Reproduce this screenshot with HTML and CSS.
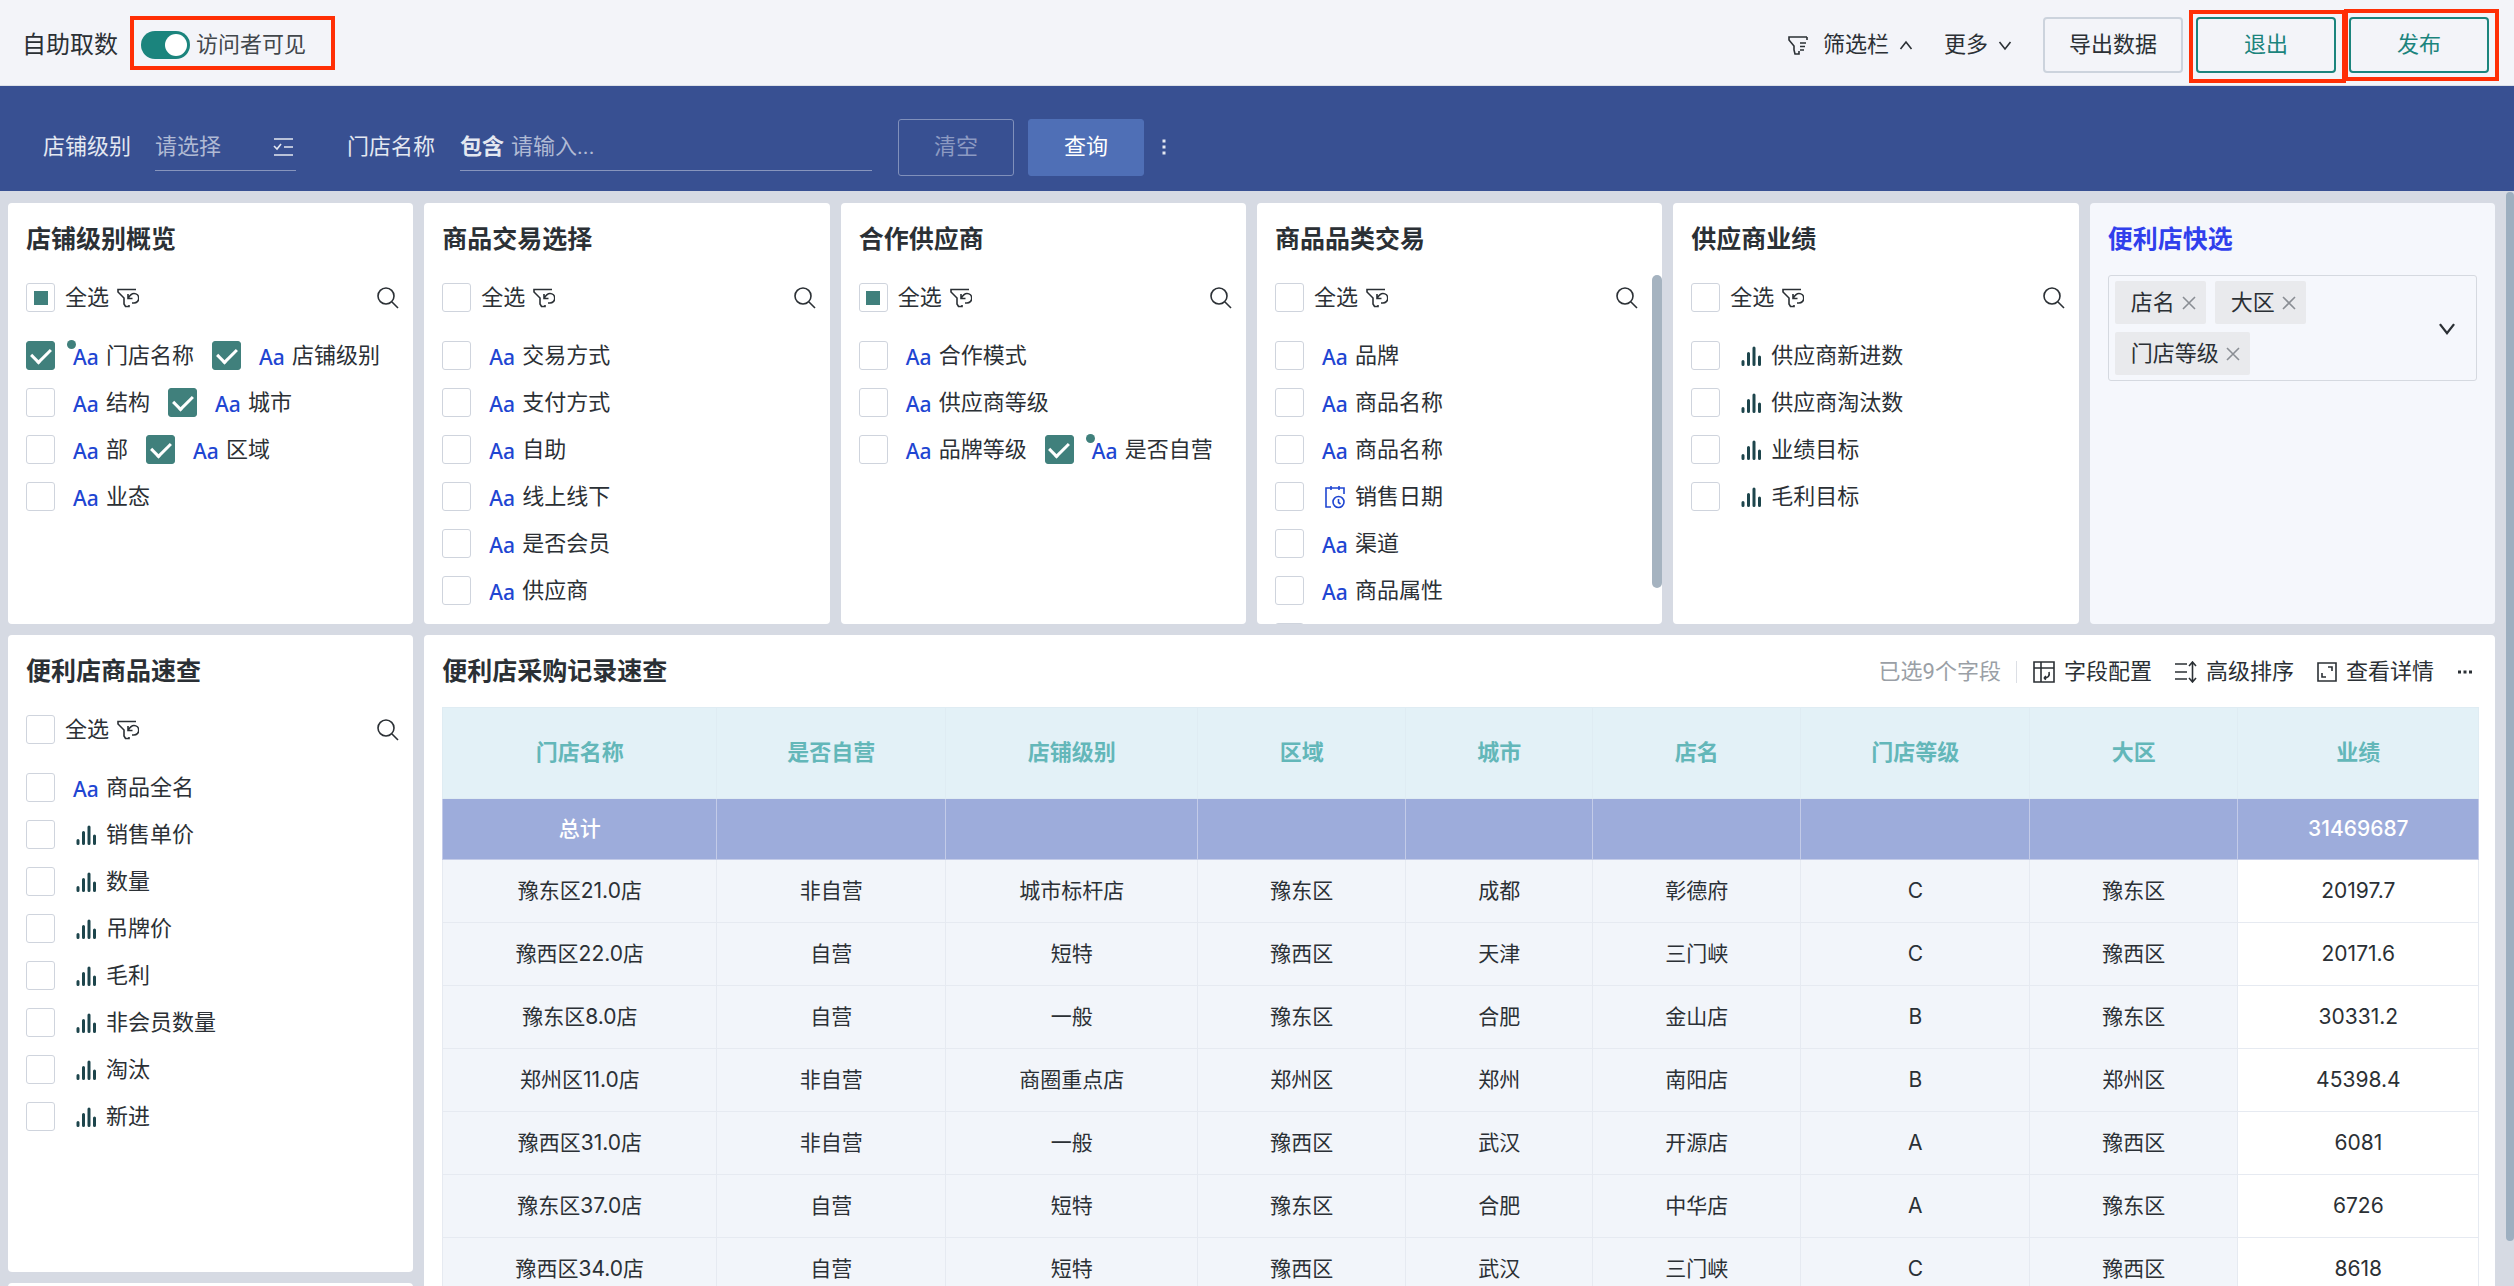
FILE: index.html
```
<!DOCTYPE html>
<html lang="zh-CN">
<head>
<title>自助取数</title>
<meta charset="UTF-8" />
<link rel="stylesheet" href="styles.css">
<script src="fields.js" defer></script>
</head>
<body>
<svg class="sprite" aria-hidden="true">
	<symbol id="i-filter" viewBox="0 0 20 20"><path d="M19 2H1v3l5 6v4l1 4h4v-3M19 2v3M12 8h6M12 11.500h5M12 15h4"/></symbol>
	<symbol id="i-up" viewBox="0 0 14 14"><path d="M1.500 11L7 4l5.500 7"/></symbol>
	<symbol id="i-down" viewBox="0 0 14 14"><path d="M1.500 4L7 11l5.500-7"/></symbol>
	<symbol id="i-list" viewBox="0 0 20 18"><path d="M1 1h19M11 9h9M1 17h19M1 8l3 3 4-5"/></symbol>
	<symbol id="i-reset" viewBox="0 0 22 20"><path d="M19 1.500H1V4l6 6v6l1.500 2.500H12V17M11 6v4.500h4.500M11 10.500C13 7 15 5.500 17 5.500a4.500 4.500 0 0 1 0 9.500h-2"/></symbol>
	<symbol id="i-search" viewBox="0 0 22 22"><circle cx="9" cy="9" r="8"/><path d="M15 15l6 6"/></symbol>
	<symbol id="i-bars" viewBox="0 0 26 22"><path d="M6 16.500v3M11.500 8.500v11M17 3v16.500M22.500 12v7.500"/></symbol>
	<symbol id="i-date" viewBox="0 0 26 24"><path d="M10 22H5V3h18v6M10 1v4M18 1v4"/><circle cx="17.500" cy="17" r="5.500"/><path d="M17.500 14v3.500l2 1.500"/></symbol>
	<symbol id="i-x" viewBox="0 0 16 16"><path d="M2 2l12 12M14 2L2 14"/></symbol>
	<symbol id="i-config" viewBox="0 0 22 22"><path d="M1 1h20v20H1zM1 7h20M8 1v20M16 11c1 4-1 6-5 6M11 17l2-2M11 17l2 1.500"/></symbol>
	<symbol id="i-sort" viewBox="0 0 22 22"><path d="M0 3h12M0 11h12M0 18h12M17.500 2v18M14 5l3.500-4L21 5M14 17l3.500 4L21 17"/></symbol>
	<symbol id="i-detail" viewBox="0 0 20 20"><path d="M1 1h18v18H1zM11 5h4v4M5 11v4h4"/></symbol>
	<symbol id="i-dots" viewBox="0 0 16 16"><path d="M1 8h3M6.500 8h3M12 8h3"/></symbol>
	<symbol id="i-vdots" viewBox="0 0 4 16"><path d="M2 .5v3M2 6.500v3M2 12.500v3"/></symbol>
</svg>

<header class="topbar">
	<h1 class="topbar-title">自助取数</h1>
	<label class="visible-switch mark mark-switch"><input type="checkbox" class="switch" role="switch" checked>访问者可见</label>
	<nav class="topbar-actions">
		<button class="link-btn"><svg class="icon icon-20 icon-lead"><use href="#i-filter"/></svg>筛选栏<svg class="icon icon-14"><use href="#i-up"/></svg></button>
		<button class="link-btn">更多<svg class="icon icon-14"><use href="#i-down"/></svg></button>
		<div class="btn-group">
			<button class="btn">导出数据</button>
			<div class="mark mark-exit"><button class="btn btn-primary">退出</button></div>
			<div class="mark mark-publish"><button class="btn btn-primary">发布</button></div>
		</div>
	</nav>
</header>

<form class="filterbar">
	<label for="level">店铺级别</label>
	<div class="field field-select">
		<select id="level"><option>请选择</option></select>
		<svg class="icon icon-20"><use href="#i-list"/></svg>
	</div>
	<label for="store">门店名称</label>
	<div class="field field-text">
		<b>包含</b>
		<input type="text" id="store" placeholder="请输入...">
	</div>
	<button type="reset" class="bar-btn">清空</button>
	<button type="button" class="bar-btn bar-btn-query">查询</button>
	<button type="button" class="more-btn" aria-label="更多"><svg class="icon icon-vdots"><use href="#i-vdots"/></svg></button>
</form>

<main class="board">
	<section class="card" data-fields="overview"><h2>店铺级别概览</h2></section>
	<section class="card" data-fields="trade"><h2>商品交易选择</h2></section>
	<section class="card" data-fields="partner"><h2>合作供应商</h2></section>
	<section class="card card-scroll" data-fields="category"><h2>商品品类交易</h2></section>
	<section class="card" data-fields="supplier"><h2>供应商业绩</h2></section>
	<section class="card card-quick">
		<h2>便利店快选</h2>
		<div class="tag-select">
			<div class="tags">
				<span class="tag">店名<button aria-label="移除"><svg class="icon icon-16"><use href="#i-x"/></svg></button></span>
				<span class="tag">大区<button aria-label="移除"><svg class="icon icon-16"><use href="#i-x"/></svg></button></span>
				<span class="tag">门店等级<button aria-label="移除"><svg class="icon icon-16"><use href="#i-x"/></svg></button></span>
			</div>
			<button class="tag-toggle" aria-label="展开"><svg class="icon icon-18"><use href="#i-down"/></svg></button>
		</div>
	</section>
	<section class="card" data-fields="goods"><h2>便利店商品速查</h2></section>
	<section class="card card-table">
		<div class="card-head">
			<h2>便利店采购记录速查</h2>
			<div class="tools">
				<span class="tools-count">已选9个字段</span>
				<button class="tool"><svg class="icon icon-22"><use href="#i-config"/></svg>字段配置</button>
				<button class="tool"><svg class="icon icon-22"><use href="#i-sort"/></svg>高级排序</button>
				<button class="tool"><svg class="icon icon-20"><use href="#i-detail"/></svg>查看详情</button>
				<button class="tool" aria-label="更多"><svg class="icon icon-16 icon-dots"><use href="#i-dots"/></svg></button>
			</div>
		</div>
		<table class="records">
			<colgroup><col class="w-name"><col class="w-md"><col class="w-lg"><col class="w-sm"><col class="w-xs"><col class="w-sm"><col class="w-md"><col class="w-sm"><col class="w-num"></colgroup>
			<thead>
				<tr><th>门店名称</th><th>是否自营</th><th>店铺级别</th><th>区域</th><th>城市</th><th>店名</th><th>门店等级</th><th>大区</th><th>业绩</th></tr>
			</thead>
			<tbody>
				<tr class="total"><td>总计</td><td></td><td></td><td></td><td></td><td></td><td></td><td></td><td>31469687</td></tr>
				<tr><td>豫东区21.0店</td><td>非自营</td><td>城市标杆店</td><td>豫东区</td><td>成都</td><td>彰德府</td><td>C</td><td>豫东区</td><td>20197.7</td></tr>
				<tr><td>豫西区22.0店</td><td>自营</td><td>短特</td><td>豫西区</td><td>天津</td><td>三门峡</td><td>C</td><td>豫西区</td><td>20171.6</td></tr>
				<tr><td>豫东区8.0店</td><td>自营</td><td>一般</td><td>豫东区</td><td>合肥</td><td>金山店</td><td>B</td><td>豫东区</td><td>30331.2</td></tr>
				<tr><td>郑州区11.0店</td><td>非自营</td><td>商圈重点店</td><td>郑州区</td><td>郑州</td><td>南阳店</td><td>B</td><td>郑州区</td><td>45398.4</td></tr>
				<tr><td>豫西区31.0店</td><td>非自营</td><td>一般</td><td>豫西区</td><td>武汉</td><td>开源店</td><td>A</td><td>豫西区</td><td>6081</td></tr>
				<tr><td>豫东区37.0店</td><td>自营</td><td>短特</td><td>豫东区</td><td>合肥</td><td>中华店</td><td>A</td><td>豫东区</td><td>6726</td></tr>
				<tr><td>豫西区34.0店</td><td>自营</td><td>短特</td><td>豫西区</td><td>武汉</td><td>三门峡</td><td>C</td><td>豫西区</td><td>8618</td></tr>
			</tbody>
		</table>
	</section>
	<section class="card card-next"></section>
	<div class="board-thumb"></div>
</main>
</body>
</html>
```
FILE: fields.js
```
// one array per row; prefix + = ticked, * = ticked and already filtered
// suffix |n = number, |d = date, default is text
var
	lists = {
		overview : { all : 'some', rows : [['*门店名称', '+店铺级别'], ['结构', '+城市'], ['部', '+区域'], ['业态']] },
		trade : { rows : [['交易方式'], ['支付方式'], ['自助'], ['线上线下'], ['是否会员'], ['供应商']] },
		partner : { all : 'some', rows : [['合作模式'], ['供应商等级'], ['品牌等级', '*是否自营']] },
		category : { rows : [['品牌'], ['商品名称'], ['商品名称'], ['销售日期|d'], ['渠道'], ['商品属性'], ['']] },
		supplier : { rows : [['供应商新进数|n'], ['供应商淘汰数|n'], ['业绩目标|n'], ['毛利目标|n']] },
		goods : { rows : [['商品全名'], ['销售单价|n'], ['数量|n'], ['吊牌价|n'], ['毛利|n'], ['非会员数量|n'], ['淘汰|n'], ['新进|n']] }
	}
;
function typeIcon(type){
	switch(type){
		case 'n':
			return '<svg class="icon icon-type icon-bars"><use href="#i-bars"/></svg>';
		case 'd':
			return '<svg class="icon icon-type icon-date"><use href="#i-date"/></svg>';
	}
	return '<i class="type-text">Aa</i>';
}
function fieldHtml(def){
	var
		parts = def.split('|'),
		flag = /^[+*]/.test(def) ? def.charAt(0) : '',
		name = parts[0].replace(/^[+*]/, '')
	;
	return '<label class="item' + (flag == '*' ? ' item-filtered' : '') + '">' +
		'<input type="checkbox" class="check"' + (flag ? ' checked' : '') + '>' +
		(name ? typeIcon(parts[1]) + '<span>' + name + '</span>' : '') + '</label>';
}
Array.prototype.forEach.call(document.querySelectorAll('[data-fields]'), function(card){
	var
		list = lists[card.getAttribute('data-fields')]
	;
	card.insertAdjacentHTML('beforeend',
		'<div class="all"><label><input type="checkbox" class="check">全选</label>' +
		'<button aria-label="重置"><svg class="icon icon-reset"><use href="#i-reset"/></svg></button>' +
		'<button class="search" aria-label="搜索"><svg class="icon icon-22"><use href="#i-search"/></svg></button></div>' +
		'<ul class="fields">' + list.rows.map(function(row){
			return '<li>' + row.map(fieldHtml).join('') + '</li>';
		}).join('') + '</ul>'
	);
	card.querySelector('.all .check').indeterminate = list.all == 'some';
});
```
FILE: styles.css
```
*{
	box-sizing: border-box;
}
body{
	display: flex;
	flex-direction: column;
	height: 100vh;
	margin: 0;
	overflow: hidden;
	background: #d6dae3;
	color: #2b3035;
	font: 22px/30px Roboto, "Noto Sans CJK SC", sans-serif;
}
button, input, select{
	margin: 0;
	padding: 0;
	border: 0;
	background: none;
	color: inherit;
	font: inherit;
}
h1, h2, ul{
	margin: 0;
	padding: 0;
	list-style: none;
}
.sprite{
	position: absolute;
	width: 0;
	height: 0;
}
.icon{
	display: block;
	flex: none;
	fill: none;
	stroke: currentColor;
	stroke-width: 1.6;
}
.icon-14{ width: 14px; height: 14px; }
.icon-16{ width: 16px; height: 16px; }
.icon-18{ width: 18px; height: 18px; stroke-width: 1.8; }
.icon-20{ width: 20px; height: 20px; }
.icon-22{ width: 22px; height: 22px; }
.icon-reset{ width: 22px; height: 20px; }
.icon-vdots{ width: 4px; height: 16px; stroke-width: 3; }
.icon-dots{ stroke-width: 3; }

/* top bar */
.topbar{
	display: flex;
	flex: none;
	align-items: center;
	height: 86px;
	padding: 4px 25px 0 22px;
	border-bottom: 1px solid #dde1e8;
	background: #f3f4f9;
}
.topbar-title{
	font-size: 24px;
	font-weight: 400;
}
.visible-switch{
	display: flex;
	align-items: center;
	gap: 6px;
	height: 28px;
	margin-left: 23px;
	color: #42474c;
}
.switch{
	appearance: none;
	width: 49px;
	height: 28px;
	padding: 3px;
	border-radius: 14px;
	background: #1b847d;
}
.switch::before{
	content: "";
	display: block;
	width: 22px;
	height: 22px;
	margin-left: auto;
	border-radius: 50%;
	background: #fff;
}
.mark{
	position: relative;
}
.mark::after{
	content: "";
	position: absolute;
	border: 4px solid #ff2f06;
	pointer-events: none;
}
.mark-switch::after{ inset: -15px -29px -11px -11px; }
.mark-exit::after{ inset: -7px -10px -10px -7px; }
.mark-publish::after{ inset: -8px -10px -8px -5px; }
.topbar-actions{
	display: flex;
	align-items: center;
	gap: 31px;
	margin-left: auto;
}
.link-btn{
	display: flex;
	align-items: center;
	gap: 10px;
}
.icon-lead{
	margin-right: 5px;
}
.btn-group{
	display: flex;
	gap: 13px;
}
.btn{
	display: block;
	width: 140px;
	height: 56px;
	border: 2px solid #ccd3dd;
	border-radius: 4px;
}
.btn-primary{
	border-color: #1b847d;
	color: #1b847d;
}

/* filter bar */
.filterbar{
	display: flex;
	flex: none;
	align-items: center;
	height: 105px;
	padding: 17px 43px 0;
	background: #385092;
	color: #e4e8f1;
}
.field{
	display: flex;
	align-items: center;
	height: 48px;
	border-bottom: 1px solid #8795bd;
}
.field-select{
	width: 141px;
	margin: 0 51px 0 24px;
	padding-right: 3px;
	justify-content: space-between;
}
.field-select select{
	appearance: none;
	color: #b0bad4;
}
.field-text{
	width: 412px;
	margin: 0 26px 0 25px;
	gap: 7px;
}
.field-text input{
	flex: 1;
	min-width: 0;
}
.field-text input::placeholder{
	color: #b0bad4;
}
.bar-btn{
	width: 116px;
	height: 57px;
	margin-right: 14px;
	border: 1px solid #8090bb;
	border-radius: 3px;
	color: #8c9ac2;
}
.bar-btn-query{
	border-color: #4f6fb6;
	background: #4f6fb6;
	color: #fff;
}
.more-btn{
	margin-left: 4px;
}

/* cards */
.board{
	position: relative;
	display: grid;
	flex: 1;
	grid-template-columns: repeat(6, 1fr);
	grid-template-rows: 421px 637px 300px;
	gap: 11px;
	min-height: 0;
	padding: 12px 19px 0 8px;
	overflow: hidden;
}
.board-thumb{
	position: absolute;
	top: 1px;
	right: 0;
	width: 8px;
	height: 1049px;
	border-radius: 4px;
	background: #9dafc0;
}
.card{
	position: relative;
	padding: 18px;
	border-radius: 4px;
	background: #fff;
	overflow: hidden;
}
.card h2{
	font-size: 25px;
	line-height: 38px;
	font-weight: 700;
}
.all{
	display: flex;
	align-items: center;
	gap: 8px;
	height: 29px;
	margin: 24px -4px 29px 0;
}
.all label{
	display: flex;
	align-items: center;
	gap: 10px;
}
.search{
	margin-left: auto;
}
.check{
	appearance: none;
	flex: none;
	display: grid;
	place-content: center;
	width: 29px;
	height: 29px;
	border: 1px solid #cfd4dd;
	border-radius: 3px;
	background: #fff;
}
.check:indeterminate::before{
	content: "";
	width: 14px;
	height: 14px;
	background: #40807c;
}
.check:checked{
	border-color: #40807c;
	background: #40807c;
}
.check:checked::before{
	content: "";
	width: 9px;
	height: 16px;
	margin-top: -4px;
	border: solid #fff;
	border-width: 0 3px 3px 0;
	transform: rotate(45deg);
}
.fields{
	display: grid;
	gap: 18px;
}
.fields li{
	display: flex;
	gap: 18px;
}
.item{
	position: relative;
	display: flex;
	align-items: center;
	height: 29px;
	white-space: nowrap;
}
.type-text, .icon-type{
	width: 26px;
	margin: 0 8px 0 17px;
}
.type-text{
	width: 25px;
	margin-left: 18px;
	padding-top: 3px;
	color: #1f46d2;
	font: 500 21px/30px "Noto Sans", sans-serif;
}
.icon-bars{
	height: 22px;
	color: #1d454c;
	stroke-width: 3;
	stroke-linecap: round;
}
.icon-date{
	height: 24px;
	color: #1f46d2;
}
.item-filtered::after{
	content: "";
	position: absolute;
	top: -1px;
	left: 41px;
	width: 9px;
	height: 9px;
	border-radius: 50%;
	background: #40807c;
}
.card-scroll .all{
	margin-right: 6px;
}
.card-scroll::after{
	content: "";
	position: absolute;
	top: 72px;
	right: 0;
	width: 10px;
	height: 313px;
	border-radius: 5px;
	background: #a5b3c0;
}

/* quick select */
.card-quick{
	background: #f5f7fc;
}
.card-quick h2{
	color: #303fec;
}
.tag-select{
	display: flex;
	align-items: center;
	margin-top: 16px;
	padding: 5px 20px 5px 6px;
	border: 1px solid #d5d9e0;
	border-radius: 3px;
}
.tags{
	display: flex;
	flex: 1;
	flex-wrap: wrap;
	gap: 8px 9px;
	padding-right: 80px;
}
.tag{
	display: flex;
	align-items: center;
	gap: 6px;
	height: 43px;
	padding: 0 9px 0 16px;
	border-radius: 2px;
	background: #e9eaed;
	white-space: nowrap;
}
.tag button{
	color: #8a8e94;
}

/* records table */
.card-table{
	grid-row: 2 / 4;
	grid-column: 2 / 7;
}
.card-head{
	display: flex;
	align-items: center;
	justify-content: space-between;
	height: 38px;
	margin-bottom: 16px;
}
.tools{
	display: flex;
	align-items: center;
	gap: 23px;
	padding-right: 4px;
}
.tools-count{
	margin-right: -7px;
	padding-right: 15px;
	border-right: 1px solid #dcdfe5;
	color: #9a9fa6;
	line-height: 22px;
}
.tool{
	display: flex;
	align-items: center;
	gap: 9px;
}
.records{
	width: 100%;
	table-layout: fixed;
	border-collapse: collapse;
	text-align: center;
}
.w-name{ width: 274px; }
.w-lg{ width: 252px; }
.w-md{ width: 229px; }
.w-sm{ width: 208px; }
.w-xs{ width: 187px; }
.w-num{ width: 241px; }
.records th, .records td{
	height: 63px;
	padding: 0;
	border: 1px solid #e6eaf1;
	background: #f2f5fa;
}
.records td{
	font-family: Inter, "Noto Sans CJK SC", sans-serif;
	font-size: 21px;
}
.records th{
	height: 91px;
	border-color: #dfecf3;
	background: #e3f1f7;
	color: #63b7b9;
	font-weight: 700;
}
.records td:last-child{
	background: #fff;
}
.records .total td, .records .total td:last-child{
	height: 61px;
	border-color: #c3cbe8;
	background: #9dacdb;
	color: #fff;
	font-weight: 500;
}
```
